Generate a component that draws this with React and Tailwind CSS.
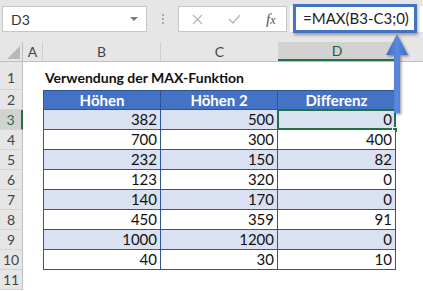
import React from 'react'

const ROWS = [
  [382, 500, 0],
  [700, 300, 400],
  [232, 150, 82],
  [123, 320, 0],
  [140, 170, 0],
  [450, 359, 91],
  [1000, 1200, 0],
  [40, 30, 10],
]

const COLS = ['w-[118px]', 'w-[117px]', 'w-[118px]']

function RowNum({ n, active, tall }) {
  return (
    <div
      className={`w-[23px] shrink-0 flex justify-center border-b border-[#d4d4d4] text-[14px] ${
        tall ? 'items-end pb-[1px]' : 'items-center'
      } ${
        active
          ? 'bg-[#d2d2d2] text-[#217346] border-r-2 border-r-[#217346]'
          : 'bg-[#e6e6e6] text-[#444] border-r border-r-[#bfbfbf]'
      }`}
    >
      {n}
    </div>
  )
}

function Arrow() {
  return (
    <svg className="absolute left-[380px] top-[30px]" width="36" height="90" viewBox="0 0 36 90">
      <defs>
        <filter id="sh" x="-50%" y="-20%" width="200%" height="150%">
          <feDropShadow dx="1.5" dy="1.5" stdDeviation="1.2" floodColor="#000" floodOpacity="0.35" />
        </filter>
        <linearGradient id="ag" x1="0" x2="1">
          <stop offset="0" stopColor="#3f6fc6" />
          <stop offset="0.5" stopColor="#5a88dc" />
          <stop offset="1" stopColor="#3f6fc6" />
        </linearGradient>
      </defs>
      <path
        d="M17 4 L28 25 L20 25 L20 83 L14 83 L14 25 L6 25 Z"
        fill="url(#ag)"
        filter="url(#sh)"
      />
    </svg>
  )
}

export default function App() {
  return (
    <div className="relative w-[423px] h-[291px] overflow-hidden bg-white font-['Lato',sans-serif] text-[#222]">
      {/* formula bar */}
      <div className="h-[42px] bg-[#e6e6e6] flex items-start pt-[6px]">
        <div className="ml-[2px] w-[145px] h-[26px] bg-white border border-[#c6c6c6] flex items-center justify-between pl-[8px] pr-[8px]">
          <span className="text-[14px] text-[#333]">D3</span>
          <span className="w-0 h-0 border-l-[4px] border-r-[4px] border-t-[4px] border-l-transparent border-r-transparent border-t-[#777]" />
        </div>
        <div className="w-[31px] h-[26px] flex flex-col items-center justify-center gap-[2px]">
          <span className="w-[2px] h-[2px] bg-[#aaa]" />
          <span className="w-[2px] h-[2px] bg-[#aaa]" />
          <span className="w-[2px] h-[2px] bg-[#aaa]" />
        </div>
        <div className="w-[109px] h-[26px] bg-white border border-[#c6c6c6] flex items-center">
          <svg className="ml-[13px]" width="11" height="11" viewBox="0 0 11 11">
            <path d="M1 1 L10 10 M10 1 L1 10" stroke="#b5b5b5" strokeWidth="1.2" fill="none" />
          </svg>
          <svg className="ml-[25px]" width="13" height="10" viewBox="0 0 13 10">
            <path d="M1 5 L5 9 L12 1" stroke="#b5b5b5" strokeWidth="1.3" fill="none" />
          </svg>
          <span className="ml-[25px] font-['Liberation_Serif',serif] italic text-[15px] text-[#555]">
            f<span className="text-[12px]">x</span>
          </span>
        </div>
        <div className="ml-[3px] flex-1 h-[26px] bg-white relative">
          <div className="absolute left-[3px] top-[-2px] w-[124px] h-[29px] border-[3px] border-[#4472c4] shadow-[1px_2px_3px_rgba(0,0,0,0.35)] flex items-center pl-[7px] text-[15px] text-[#222]">
            =MAX(B3-C3;0)
          </div>
        </div>
      </div>

      {/* column headers */}
      <div className="h-[20px] flex bg-[#e6e6e6] border-b border-[#bfbfbf] text-[14px] text-[#444]">
        <div className="w-[23px] shrink-0 border-r border-[#bfbfbf] relative">
          <span className="absolute right-[2px] bottom-[2px] w-0 h-0 border-b-[13px] border-l-[13px] border-b-[#b8b8b8] border-l-transparent" />
        </div>
        <div className="w-[20px] shrink-0 border-r border-[#cfcfcf] flex items-center justify-center">A</div>
        <div className="w-[118px] shrink-0 border-r border-[#cfcfcf] flex items-center justify-center">B</div>
        <div className="w-[117px] shrink-0 flex items-center justify-center">C</div>
        <div className="w-[118px] shrink-0 bg-[#d2d2d2] text-[#1e5c38] border-b-2 border-[#217346] flex items-center justify-center">
          D
        </div>
        <div className="flex-1 border-l border-[#cfcfcf]" />
      </div>

      {/* row 1 */}
      <div className="h-[28px] flex">
        <RowNum n={1} tall />
        <div className="w-[20px] shrink-0" />
        <div className="w-[118px] shrink-0 flex items-end pb-[2px] pl-[2px] whitespace-nowrap font-bold text-[14px] text-[#111]">
          Verwendung der MAX-Funktion
        </div>
      </div>

      {/* row 2: table header */}
      <div className="h-[20px] flex">
        <RowNum n={2} />
        <div className="w-[20px] shrink-0" />
        {['Höhen', 'Höhen 2', 'Differenz'].map((h, i) => (
          <div
            key={h}
            className={`${COLS[i]} shrink-0 bg-[#4472c4] border-t border-b border-r border-[#2f5597] ${
              i === 0 ? 'border-l' : ''
            } flex items-center justify-center font-bold text-[15px] text-white`}
          >
            {h}
          </div>
        ))}
      </div>

      {/* data rows */}
      {ROWS.map((r, ri) => (
        <div key={ri} className="h-[20px] flex">
          <RowNum n={ri + 3} active={ri === 0} />
          <div className="w-[20px] shrink-0" />
          {r.map((v, ci) => (
            <div
              key={ci}
              className={`${COLS[ci]} shrink-0 relative border-b border-r border-[#2f5597] ${
                ci === 0 ? 'border-l' : ''
              } ${ri % 2 === 0 ? 'bg-[#d9e1f2]' : 'bg-white'} flex items-center justify-end pr-[3px] text-[15px] text-[#111]`}
            >
              {v}
              {ri === 0 && ci === 2 && (
                <>
                  <span className="absolute left-[-1px] top-[-1px] right-[-1px] bottom-[-1px] border-2 border-[#217346]" />
                  <span className="absolute right-[-3px] bottom-[-4px] w-[6px] h-[6px] bg-[#217346] border border-white" />
                </>
              )}
            </div>
          ))}
        </div>
      ))}

      {/* row 11 */}
      <div className="h-[20px] flex">
        <RowNum n={11} />
      </div>

      <Arrow />
    </div>
  )
}
